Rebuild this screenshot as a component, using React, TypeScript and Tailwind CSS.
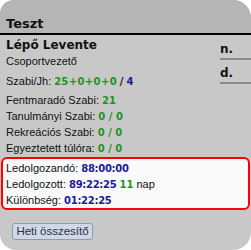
import React from "react";

const LIB = { fontFamily: '"Liberation Sans", Arial, sans-serif' };
const DJ = { fontFamily: '"DejaVu Sans", Verdana, sans-serif' };

function G({ children }: { children: React.ReactNode }) {
  return (
    <span className="font-bold text-[10px] text-[#1f931f]" style={DJ}>
      {children}
    </span>
  );
}
function B({ children }: { children: React.ReactNode }) {
  return (
    <span className="font-bold text-[10px] text-[#1c1c96] tracking-[-0.3px]" style={DJ}>
      {children}
    </span>
  );
}

export default function App() {
  return (
    <div className="w-[251px] h-[250px] bg-white overflow-hidden" style={LIB}>
      <div className="w-[251px] h-[250px] bg-[#c8c8c8] rounded-tl-[14px] rounded-tr-[18px] rounded-bl-[16px] rounded-br-[18px] overflow-hidden flex flex-col">
        <div className="h-[35px] shrink-0 bg-[#b5b5b5] border-b-2 border-black flex items-end pl-[6px] pb-[3px]">
          <span className="text-[13px] font-bold text-[#111] leading-[13px]" style={DJ}>
            Teszt
          </span>
        </div>
        <div className="flex">
          <div className="flex-1 pl-[6px] pt-[3px] text-[11px] text-[#111] leading-[16px]">
            <div className="text-[12px] font-bold h-[15px] leading-[15px]" style={DJ}>
              Lépő Levente
            </div>
            <div className="h-[16px]">Csoportvezető</div>
            <div className="h-[16px] mt-[4px] whitespace-nowrap">
              Szabi/Jh:{" "}
              <G>
                25<span className="px-[0.4px]">+</span>0<span className="px-[0.4px]">+</span>0
                <span className="px-[0.4px]">+</span>0
              </G>{" "}
              <span className="font-bold text-[10px] text-[#111]" style={DJ}>
                /
              </span>{" "}
              <B>4</B>
            </div>
            <div className="h-[16px] mt-[3px] whitespace-nowrap">
              Fentmaradó Szabi: <G>21</G>
            </div>
            <div className="h-[16px] whitespace-nowrap">
              Tanulmányi Szabi: <G>0 / 0</G>
            </div>
            <div className="h-[16px] whitespace-nowrap">
              Rekreációs Szabi: <G>0 / 0</G>
            </div>
            <div className="h-[16px] whitespace-nowrap">
              Egyeztetett túlóra: <G>0 / 0</G>
            </div>
          </div>
          <div className="w-[31px] shrink-0 pt-[6px] text-[12px] font-bold text-[#111] leading-[16px]" style={DJ}>
            <div className="h-[19px] border-b-2 border-[#8a8a8a]">n.</div>
            <div className="h-[19px] mt-[5px] border-b-2 border-[#8a8a8a]">d.</div>
          </div>
        </div>
        <div className="mx-[1px] mt-[1px] h-[53px] shrink-0 border-2 border-[#ff0000] rounded-[6px] bg-[#f9f9f9] pl-[3px] pt-[1px] text-[11px] text-[#111] leading-[16px]">
          <div className="h-[16px] whitespace-nowrap">
            Ledolgozandó: <B>88:00:00</B>
          </div>
          <div className="h-[16px] whitespace-nowrap">
            Ledolgozott: <B>89:22:25</B> <G>11</G> nap
          </div>
          <div className="h-[16px] whitespace-nowrap">
            Különbség: <B>01:22:25</B>
          </div>
        </div>
        <div className="pl-[12px] pt-[8px]">
          <button
            className="h-[17px] w-[81px] bg-[#d0d8e3] border border-[#8e9cb2] rounded-[3px] text-[11.5px] text-[#27324e] leading-[15px] text-center"
            style={LIB}
          >
            Heti összesítő
          </button>
        </div>
      </div>
    </div>
  );
}
